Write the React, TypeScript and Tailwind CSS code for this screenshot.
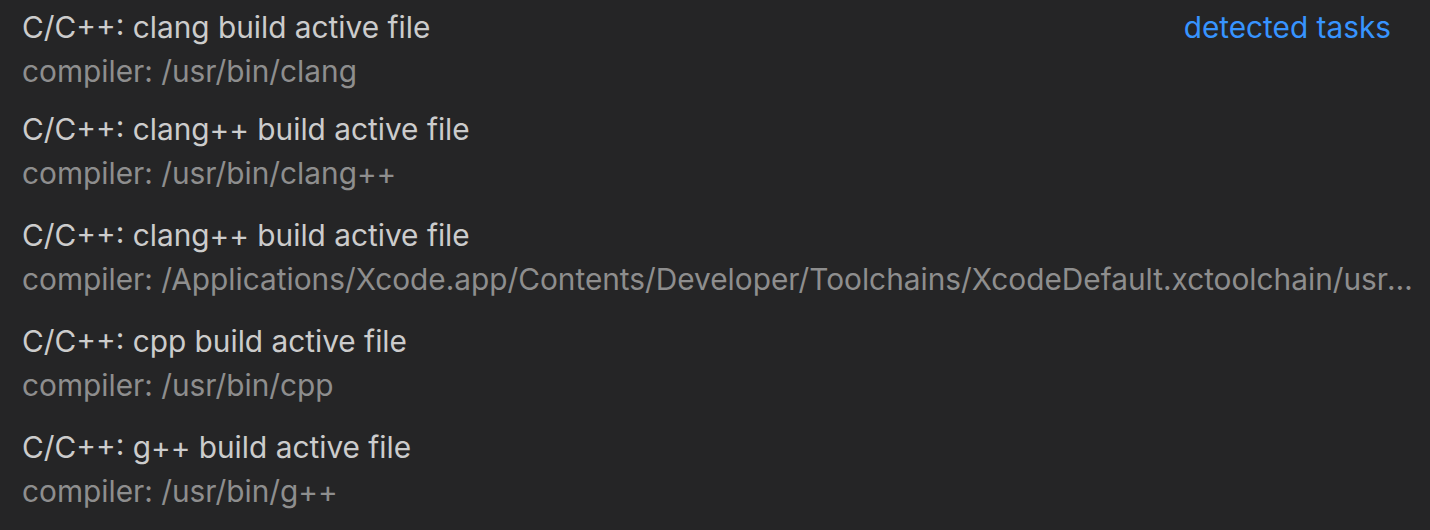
import React from "react";

type Task = { label: string; detail: string };

const tasks: Task[] = [
  { label: "C/C++: clang build active file", detail: "compiler: /usr/bin/clang" },
  { label: "C/C++: clang++ build active file", detail: "compiler: /usr/bin/clang++" },
  {
    label: "C/C++: clang++ build active file",
    detail:
      "compiler: /Applications/Xcode.app/Contents/Developer/Toolchains/XcodeDefault.xctoolchain/usr/bin/clang++",
  },
  { label: "C/C++: cpp build active file", detail: "compiler: /usr/bin/cpp" },
  { label: "C/C++: g++ build active file", detail: "compiler: /usr/bin/g++" },
];

export default function App() {
  return (
    <div
      className="w-[1430px] h-[530px] bg-[#252526] overflow-hidden text-[29.8px]"
      style={{ fontFamily: "Inter, 'Liberation Sans', sans-serif" }}
    >
      {tasks.map((t, i) => (
        <div
          key={i}
          className={`${i === 0 ? "h-[102px]" : "h-[106px]"} pt-[5px] pl-[22px] pr-[10px]`}
        >
          <div className="flex items-center justify-between leading-[44px]">
            <span className="text-[#cccccc] whitespace-nowrap">{t.label}</span>
            {i === 0 && (
              <span className="text-[#3794ff] pr-[29px] whitespace-nowrap">detected tasks</span>
            )}
          </div>
          <div className="leading-[44px] text-[#8e8e8e] truncate">{t.detail}</div>
        </div>
      ))}
    </div>
  );
}
